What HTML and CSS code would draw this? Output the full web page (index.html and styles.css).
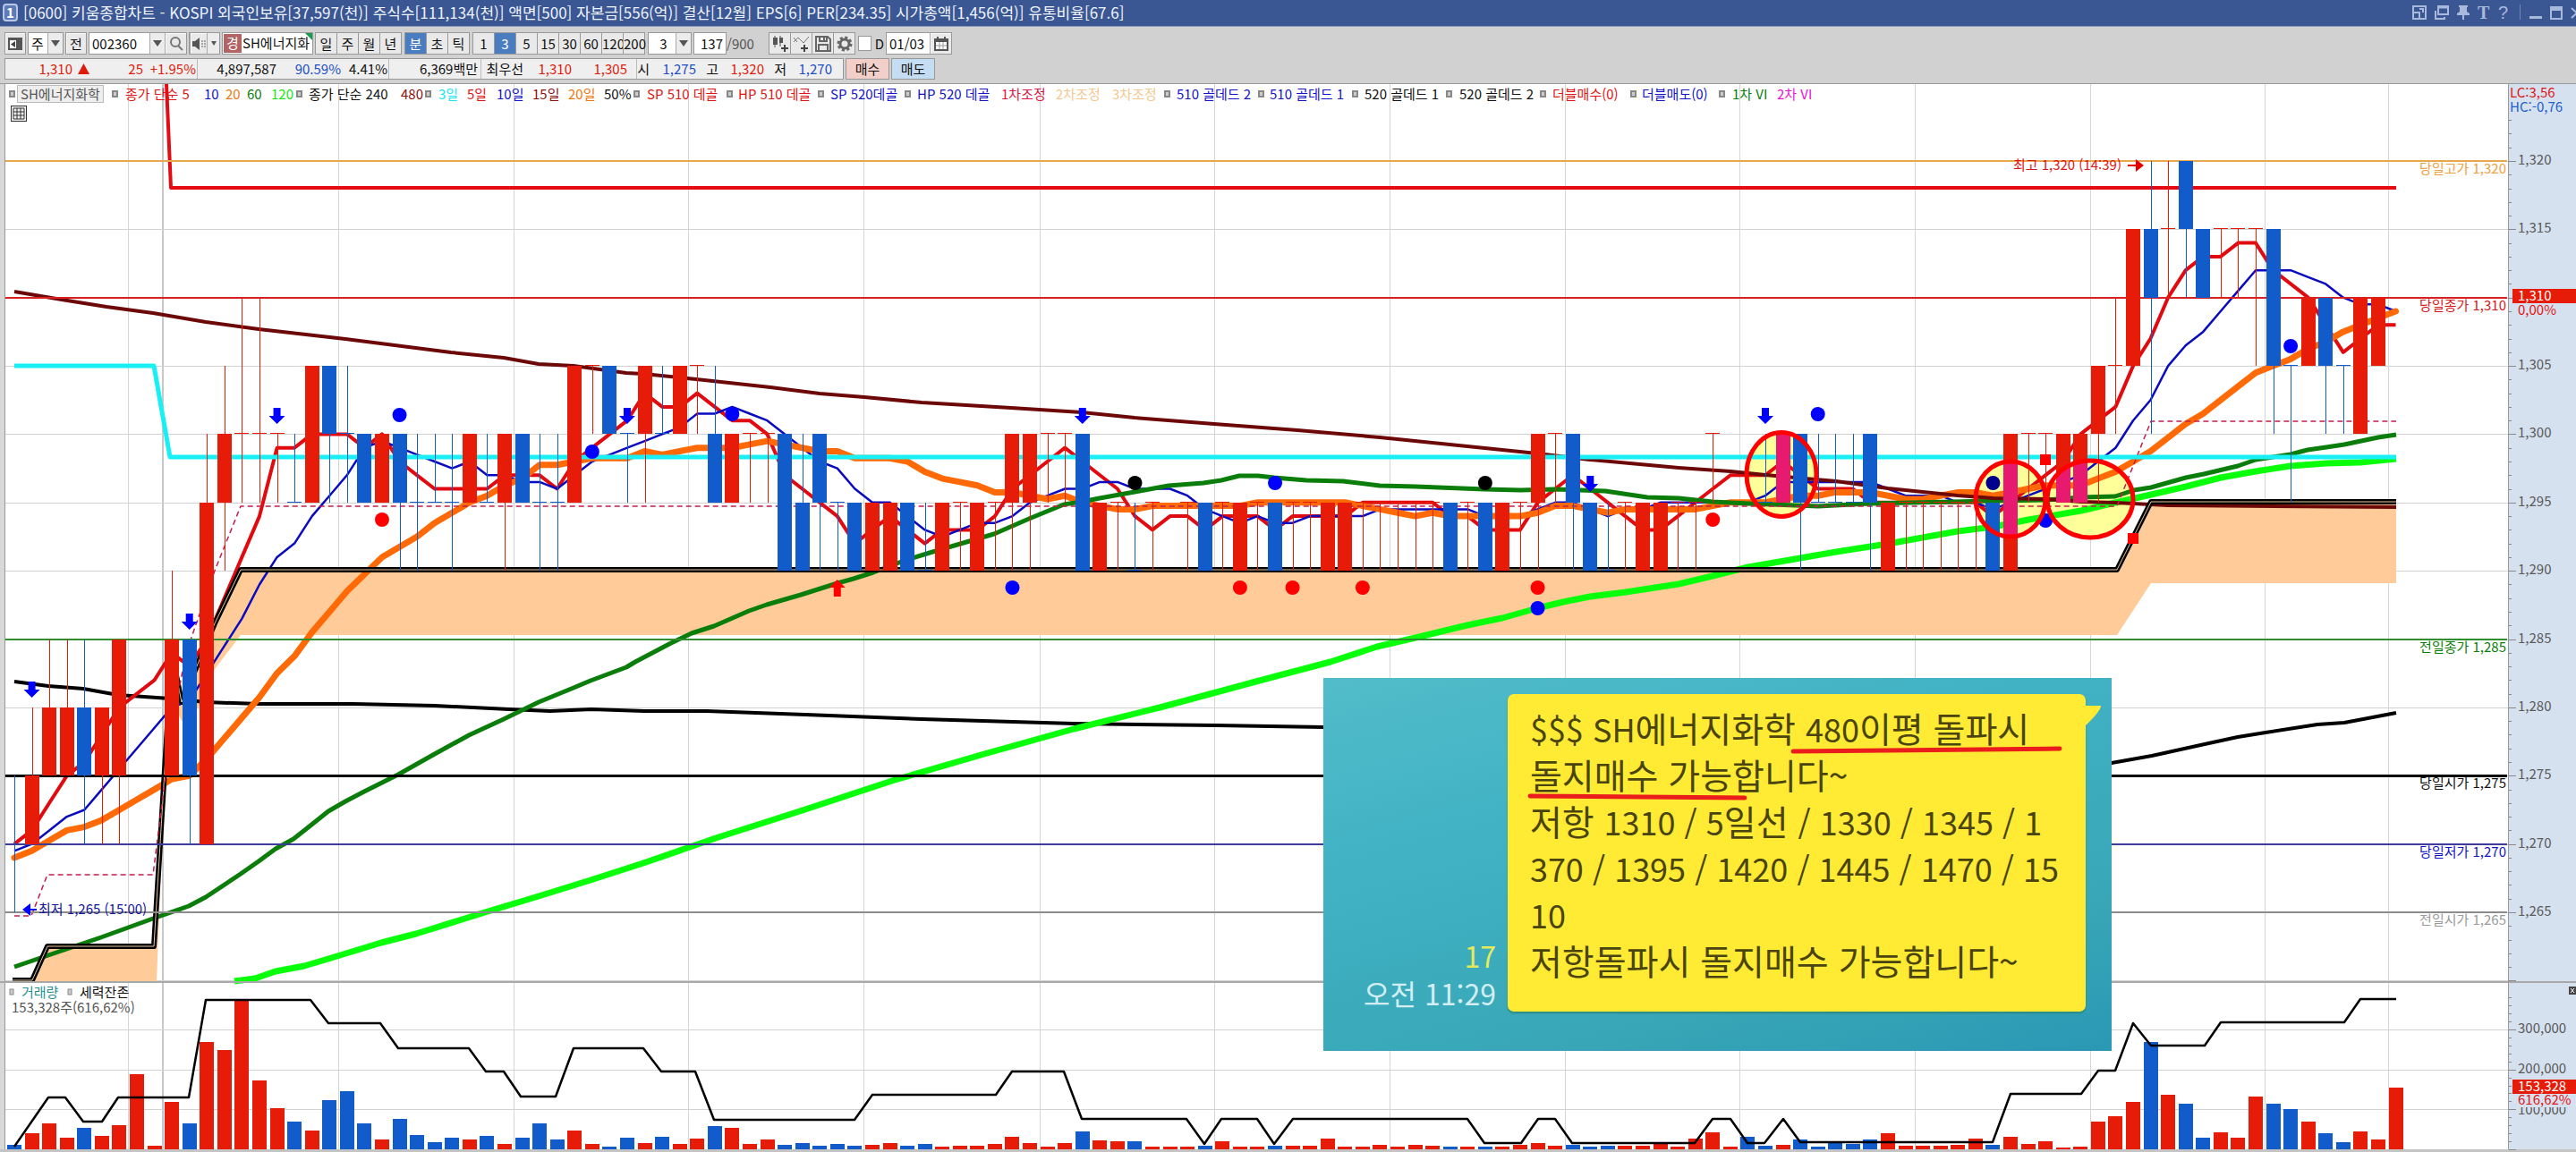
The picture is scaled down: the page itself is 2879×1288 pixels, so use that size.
FILE: index.html
```
<!DOCTYPE html>
<html lang="ko">
<head>
<meta charset="utf-8">
<title>[0600] 키움종합차트</title>
<link rel="stylesheet" href="styles.css">
</head>
<body>
<header class="titlebar">
  <span class="badge">1</span>
  <h1>[0600] 키움종합차트 - KOSPI 외국인보유[37,597(천)] 주식수[111,134(천)] 액면[500] 자본금[556(억)] 결산[12월] EPS[6] PER[234.35] 시가총액[1,456(억)] 유통비율[67.6]</h1>
  <div class="winbtns">
    <button aria-label="화면 축소"><svg width="16" height="16" viewBox="0 0 16 16"><path d="M1 1h14v14H1zM1 8h7v7"/><path d="M8 4h4v4"/></svg></button>
    <button aria-label="화면 복제"><svg width="16" height="16" viewBox="0 0 16 16"><path d="M4 1h11v9H4z"/><path d="M4 2.500h11" /><path d="M1 6v9h10v-2"/></svg></button>
    <button aria-label="고정"><svg width="14" height="18" viewBox="0 0 14 18"><path class="solid" d="M2 1h10v2h-1v5l3 2v2H8v5H6v-5H0v-2l3-2V3H2z"/></svg></button>
    <button class="serif">T</button>
    <button class="serif thin">?</button>
    <i></i>
    <button aria-label="최소화"><svg width="14" height="16" viewBox="0 0 14 16"><path class="solid" d="M0 12h14v3H0z"/></svg></button>
    <button aria-label="최대화"><svg width="14" height="16" viewBox="0 0 14 16"><path d="M1 2h12v13H1z"/><path class="solid" d="M0 2h14v4H0z"/></svg></button>
    <button aria-label="닫기"><svg width="14" height="16" viewBox="0 0 14 16"><path d="M1 3l12 11M13 3L1 14"/></svg></button>
  </div>
</header>

<div class="toolbar">
  <button class="btn w24" aria-label="목록"><svg width="16" height="16" viewBox="0 0 16 16"><path d="M1 2h14v12H1z" fill="#fff" stroke="#555" stroke-width="2"/><path d="M9 2h6v12H9zM1 1h14v3H1z" fill="#555"/><path d="M8 5v7L3 8.500z" fill="#444"/></svg></button>
  <div class="combo w40"><select aria-label="주기"><option>주</option></select><span class="drop"></span></div>
  <button class="btn w24">전</button>
  <div class="combo w110"><input class="left" aria-label="종목코드" value="002360"><span class="drop wide"></span><button class="btn w24 last" aria-label="검색"><svg width="16" height="16" viewBox="0 0 16 16"><circle cx="7" cy="6" r="5" fill="none" stroke="#777" stroke-width="2"/><path d="M10 10l5 5" stroke="#777" stroke-width="2"/></svg></button></div>
  <div class="combo w36"><button class="btn w20" aria-label="소리"><svg width="16" height="16" viewBox="0 0 16 16"><path d="M1 5h3l5-4v14l-5-4H1z" fill="#555"/><path d="M11 5h2M11 8h2M11 11h2M14 5h2M14 8h2M14 11h2" stroke="#666" stroke-width="1"/></svg></button><span class="drop small"></span></div>
  <div class="combo w102 stock"><b>경</b><span>SH에너지화</span></div>
  <div class="seg"><button>일</button><button>주</button><button>월</button><button>년</button></div>
  <div class="seg"><button class="on">분</button><button>초</button><button>틱</button></div>
  <div class="seg"><button>1</button><button class="on">3</button><button>5</button><button>15</button><button>30</button><button>60</button><button>120</button><button>200</button></div>
  <div class="combo w50"><select aria-label="분 간격" class="mid"><option>3</option></select><span class="drop"></span></div>
  <div class="count"><input aria-label="표시 봉 수" value="137"><span>/900</span></div>
  <div class="seg icons">
    <button aria-label="차트 추가"><svg width="20" height="20" viewBox="0 0 20 20"><path d="M4 1v13M10 1v12" stroke="#555"/><path d="M2 3h5v8H2zM9 3h4v6H9z" fill="#555"/><path d="M11 15h8M15 11v8" stroke="#444" stroke-width="2"/></svg></button>
    <button aria-label="지표 추가"><svg width="20" height="20" viewBox="0 0 20 20"><path d="M1 8l5-5 6 6 6-7M1 3l4 5" stroke="#777" fill="none"/><path d="M9 15h8M13 11v8" stroke="#444" stroke-width="2"/></svg></button>
    <button aria-label="저장"><svg width="20" height="20" viewBox="0 0 20 20"><path d="M2 2h13l3 3v13H2z" fill="none" stroke="#666" stroke-width="2"/><path d="M6 2v5h8V2M5 18v-7h10v7M11 3v3" fill="none" stroke="#666" stroke-width="2"/></svg></button>
    <button aria-label="설정"><svg width="20" height="20" viewBox="0 0 20 20"><circle cx="10" cy="10" r="5" fill="none" stroke="#666" stroke-width="3"/><circle cx="10" cy="10" r="7" fill="none" stroke="#666" stroke-width="3" stroke-dasharray="3 2.500"/></svg></button>
  </div>
  <label class="check"><input type="checkbox">D</label>
  <div class="combo w74"><input class="date" aria-label="날짜" value="01/03"><button class="btn w24 last" aria-label="달력"><svg width="16" height="16" viewBox="0 0 16 16"><path d="M1 3h14v12H1z" fill="#fff" stroke="#555" stroke-width="2"/><path d="M0 2h16v4H0z" fill="#555"/><path d="M4 0v3M12 0v3" stroke="#555" stroke-width="2"/><path d="M6 6v8M10 6v8M2 10h12" stroke="#999"/></svg></button></div>
</div>

<div class="quote">
  <div class="cells">
    <div class="c1 up"><span>1,310</span><svg width="13" height="12" viewBox="0 0 13 12"><path d="M6.500 0L13 12H0z" fill="#e01b0c"/></svg><span>25</span><span>+1.95%</span></div>
    <div class="c2"><span>4,897,587</span><span class="down">90.59%</span><span>4.41%</span></div>
    <div class="c3"><span>6,369백만</span></div>
    <div class="c4"><span>최우선</span><span class="up">1,310</span><span class="up">1,305</span></div>
    <div class="c5"><span>시</span><span class="down">1,275</span><span>고</span><span class="up">1,320</span><span>저</span><span class="down">1,270</span></div>
  </div>
  <button class="buy">매수</button>
  <button class="sell">매도</button>
</div>

<main class="chart">
  <svg id="plot" class="plot" viewBox="0 94 2879 1194" role="img" aria-label="SH에너지화학 3분봉 차트"></svg>
  <div class="legend">
    <i></i><b>SH에너지화학</b>
    <i></i><span class="red">종가 단순 5</span><span class="blue">10</span><span class="orange">20</span><span class="green">60</span><span class="lime">120</span>
    <i></i><span>종가 단순 240</span><span class="maroon">480</span>
    <i></i><span class="cyan">3일</span><span class="red">5일</span><span class="blue">10일</span><span class="maroon">15일</span><span class="orange">20일</span><span>50%</span>
    <i></i><span class="red">SP 510 데골</span><i></i><span class="red">HP 510 데골</span>
    <i></i><span class="blue">SP 520데골</span><i></i><span class="blue">HP 520 데골</span>
    <span class="crimson">1차조정</span><span class="sand">2차조정</span><span class="sand">3차조정</span>
    <i></i><span class="blue">510 골데드 2</span><i></i><span class="blue">510 골데드 1</span>
    <i></i><span>520 골데드 1</span><i></i><span>520 골데드 2</span>
    <i></i><span class="red">더블매수(0)</span><i></i><span class="blue">더블매도(0)</span>
    <i></i><span class="green">1차 VI</span><span class="magenta">2차 VI</span>
  </div>
  <button class="gridbtn" aria-label="표 보기"><svg width="14" height="14" viewBox="0 0 14 14"><path d="M1 1h12v12H1zM1 5h12M1 9h12M5 1v12M9 1v12" fill="none" stroke="#333"/></svg></button>

  <aside class="memo">
    <div class="meta"><span class="unread">17</span><time>오전 11:29</time></div>
    <p class="bubble"><span>$$$ SH</span>에너지화학 <span>480</span>이평 돌파시<br>돌지매수 가능합니다~<br>저항 <span>1310 / 5</span>일선 <span>/ 1330 / 1345 / 1</span><br><span>370 / 1395 / 1420 / 1445 / 1470 / 15</span><br><span>10</span><br>저항돌파시 돌지매수 가능합니다~</p>
    <svg class="marks" viewBox="0 0 881 417"><path d="M846 31H869q0 6 -18 23z" fill="#ffeb33"/><path d="M525 82L823 79M231 132L471 134" stroke="#ea1c1c" stroke-width="5" stroke-linecap="round"/></svg>
  </aside>
</main>
<script src="chart.js"></script>
</body>
</html>
```
FILE: styles.css
```
* { box-sizing: border-box; }
body {
  margin: 0;
  background: #d1d1d1;
  color: #111;
  font: 15px/20px "Noto Sans CJK KR", "Liberation Sans", sans-serif;
  overflow-x: hidden;
}
button, input, select { font: inherit; color: inherit; margin: 0; padding: 0; border: 0; border-radius: 0; background: none; }
svg { display: block; }

.titlebar { display: flex; align-items: center; gap: 6px; height: 30px; padding: 0 0 2px 3px; background: #3a5793; border-bottom: 1px solid #8b97b8; color: #eef2fb; overflow: hidden; }
.titlebar h1 { flex: 1; margin: 0; font-size: 17px; font-weight: 400; white-space: nowrap; }
.badge { width: 17px; height: 20px; border: 2px solid #b9c6e6; border-radius: 4px; background: #5d7bb8; font-weight: 700; line-height: 16px; text-align: center; color: #fff; }
.winbtns { display: flex; align-items: center; gap: 9px; margin-right: -8px; color: #a9b9dc; }
.winbtns i { width: 1px; height: 17px; margin: 0 1px 0 3px; background: #7186b6; }
.winbtns path { fill: none; stroke: #a9b9dc; stroke-width: 2; }
.winbtns .solid { fill: #a9b9dc; stroke: none; }
.serif { width: 13px; font: 700 20px/20px "Liberation Serif", serif; }
.thin { font-family: "Liberation Sans", sans-serif; font-weight: 400; }

.toolbar { display: flex; align-items: center; gap: 2px; height: 31px; padding: 6px 0 0 5px; white-space: nowrap; }
.toolbar > * { flex: none; height: 25px; }
.btn { display: flex; align-items: center; justify-content: center; height: 100%; background: #e9e9e9; border: 1px solid #999; box-shadow: inset 1px 1px #fafafa; }
.combo { display: flex; border: 1px solid #999; background: #fff; overflow: hidden; }
.combo > .btn { border: 0; border-left: 1px solid #aaa; }
.combo input, .combo select { flex: 1; min-width: 0; height: 100%; padding-left: 3px; appearance: none; background: #fff; }
.combo .mid { text-align: center; }
.w20 { width: 20px; } .w24 { width: 24px; } .w36 { width: 35px; } .w40 { width: 40px; } .w50 { width: 49px; }
.w74 { width: 74px; } .w102 { width: 102px; } .w110 { width: 110px; }
.drop { display: flex; align-items: center; justify-content: center; width: 17px; background: #ececec; border-left: 1px solid #aaa; }
.drop::after { content: ""; border: 5px solid transparent; border-top: 7px solid #555; border-bottom: 0; }
.small { width: 14px; }
.small::after { border-width: 5px 3px 0; }
.stock { position: relative; padding: 1px; }
.stock b { flex: none; width: 20px; background: #b26464; color: #fff; font-weight: 400; text-align: center; }
.stock span { padding-left: 1px; }
.stock::after { content: ""; position: absolute; top: 0; right: 0; border: 4px solid; border-color: #1a9c50 #1a9c50 transparent transparent; }
.seg { display: flex; border: 1px solid #999; border-left: 0; margin-right: 1px; }
.seg button { width: 24px; background: #e9e9e9; border-left: 1px solid #999; text-align: center; }
.seg .on { background: #4a7dc0; color: #fff; }
.icons button { display: flex; align-items: center; justify-content: center; }
.count { display: flex; align-items: center; width: 82px; color: #555; }
.count input { width: 37px; height: 25px; border: 1px solid #999; background: #fff; color: #111; text-align: right; padding-right: 3px; }
.check { display: flex; align-items: center; gap: 4px; width: 29px; }
.check input { appearance: none; width: 16px; height: 17px; background: #fff; border: 1px solid #999; }

.quote { display: flex; gap: 2px; height: 32px; padding: 4px 0 4px 5px; white-space: nowrap; }
.cells { display: flex; width: 938px; border: 1px solid #999; background: #efefef; }
.cells > div { display: grid; align-items: center; justify-items: end; border-right: 1px solid #bbb; }
.cells > div:last-child { border: 0; }
.c1 { width: 215px; grid-template-columns: 75px 19px 60px 59px; }
.c2 { width: 214px; grid-template-columns: 88px 72px 52px; }
.c3 { width: 103px; padding-right: 3px; }
.c4 { width: 174px; grid-template-columns: 47px 54px 62px; }
.c5 { width: 230px; grid-template-columns: 14px 52px 25px 51px 25px 51px; }
.up { color: #e01b0c; }
.down { color: #1d4fc4; }
.buy, .sell { width: 49px; border: 1px solid #999; background: #f3cfca; }
.sell { background: #c5ddf2; }

.chart { position: relative; border-top: 1px solid #999; }
.plot { width: 100%; height: auto; font-size: 15px; }
.legend {
  position: absolute; top: 1px; left: 10px; display: grid; align-items: center; white-space: nowrap;
  grid-template-columns: 9px 106px 15px 88px 24px 24px 27px 28px 14px 103px 27px 15px 32px 33px 40px 40px 40px 33px 15px 89px 13px 89px 14px 83px 14px 94px 61px 63px 58px 14px 91px 13px 92px 14px 91px 15px 90px 14px 87px 13px 86px 15px 50px 50px;
}
.legend i { width: 7px; height: 8px; border: 2px solid #888; background: #ccc; }
.legend b { justify-self: start; padding: 0 3px; background: #eee; border: 1px solid #bbb; font-weight: 400; line-height: 18px; color: #555; }
.red { color: #e01414; } .blue { color: #1414c8; } .orange { color: #f07810; } .green { color: #0a7d0a; }
.lime { color: #14e614; } .maroon { color: #8b1010; } .cyan { color: #19e6ee; } .crimson { color: #dc1446; }
.sand { color: #f5c890; } .magenta { color: #e614d2; }
.gridbtn { position: absolute; top: 24px; left: 12px; padding: 1px; border: 1px solid #333; background: #eee; }

.memo {
  position: absolute; left: 51.37%; top: 55.6%; width: 30.6%; height: 34.93%;
  display: flex; align-items: flex-end; justify-content: flex-end; gap: 13px; padding: 18px 29px 44px 0;
  background: linear-gradient(165deg, #52bcca, #40b2c4 35%, #38a6b6 75%, #2a98b4);
  white-space: nowrap;
}
.meta { display: flex; flex-direction: column; align-items: flex-end; font-size: 32px; line-height: 42px; color: #d3eef2; }
.unread { color: #e6ea5a; }
.bubble { width: 646px; height: 100%; margin: 0; padding: 11px 0 0 25px; border-radius: 7px; background: #ffeb33; box-shadow: 0 2px 2px #2f8a80; color: #4a4410; font-size: 39px; line-height: 52px; }
.bubble span { font-size: 36px; line-height: 1; }
.marks { position: absolute; inset: 0; width: 100%; height: 100%; }
```
FILE: chart.js
```
const svg = document.getElementById('plot');
const NS = 'http://www.w3.org/2000/svg';
const RED = '#e61b08', BLUE = '#115bcb';

function el(name, attrs, parent = svg) {
  const node = document.createElementNS(NS, name);
  for (const key in attrs) node.setAttribute(key, attrs[key]);
  parent.appendChild(node);
  return node;
}
function rect(x, y, width, height, fill, parent) { return el('rect', { x, y, width, height, fill }, parent); }
function text(x, y, str, fill, anchor = 'start') {
  el('text', { x, y, fill, 'text-anchor': anchor }).textContent = str;
}
function line(points, stroke, width, extra = {}) {
  return el('polyline', { points: points, stroke, 'stroke-width': width, fill: 'none', 'stroke-linejoin': 'round', ...extra });
}

// Levels count 5-won steps above 1,260.
const levelY = l => 1096.4 - l * 76.37;
const barX = i => 16 + i * 19.57;
const volumeBase = 1285;

// colour, body bottom, body top, high, low
const F7 = 'r7 7 7 6';
const candles = [
  'b2 3 3 1', 'r2 3 4 2', 'r3 4 5 3', 'r3 4 5 3', 'b3 4 5 2', 'r3 4 4 2', 'r3 5 5 2', 'r5 5 5 5', 'r5 5 5 5', 'r3 5 6 3',
  'b3 5 5 2', 'r2 7 8 2', 'r7 8 9 6', 'r8 8 10 7', 'r8 8 10 7', 'r8 8 8 7', 'b7 7 8 7', 'r7 9 9 7', 'b8 9 9 7', 'b8 8 9 7',
  'b7 8 8 7', 'r7 8 8 7', 'b7 8 8 6', 'b7 7 8 6', 'b7 7 8 7', 'b7 7 8 6', 'r7 8 8 7', 'b7 7 8 7', 'r7 8 8 6', 'b7 8 8 7',
  'b7 7 8 6', 'b7 7 8 6', 'r7 9 9 7', 'r9 9 9 8', 'b8 9 9 8', 'b8 8 8 7', 'r8 9 9 7', 'b8 8 9 8', 'r8 9 9 8', 'r9 9 9 8',
  'b7 8 9 7', 'r7 8 8 7', 'r8 8 8 7', 'r8 8 8 7', 'b6 8 8 6', 'b6 7 8 6', 'b7 8 8 6', 'b7 7 7 6', 'b6 7 7 6', 'r6 7 7 6',
  'r6 7 7 6', 'b6 7 7 6', 'b6 6 7 6', 'r6 7 7 6', F7, 'r6 7 7 6', F7, 'r7 8 8 6', 'r7 8 8 6', 'r8 8 8 7',
  'r8 8 8 7', 'b6 8 8 6', 'r6 7 7 6', F7, 'b6 6 7 6', F7, 'r7 7 7 7', F7, 'b6 7 7 6', F7,
  'r6 7 7 6', F7, 'b6 7 7 6', F7, F7, 'r6 7 7 6', 'r6 7 7 6', F7, F7, F7,
  F7, F7, 'b6 7 7 6', F7, 'b6 7 7 6', 'r6 7 7 6', F7, 'r7 8 8 6', 'r8 8 8 7', 'b7 8 8 6',
  'b6 7 7 6', 'b6 6 7 6', F7, 'r6 7 7 6', 'r6 7 7 6', F7, F7, 'r8 8 8 7', 'r8 8 8 8', 'b7 7 7 7',
  'b7 7 8 7', 'r7 8 8 7', 'b7 8 8 6', 'b7 7 8 7', 'b7 7 8 7', 'b7 7 8 7', 'b7 8 8 6', 'r6 7 7 6', F7, F7,
  F7, F7, F7, 'b6 7 7 6', 'r6 8 8 6', 'r8 8 8 7', 'r8 8 8 7', 'r7 8 8 7', 'r7 8 8 7', 'r8 9 9 7',
  'r9 9 10 8', 'r9 11 11 9', 'b10 11 12 8', 'r11 11 12 10', 'b11 12 12 10', 'b10 11 11 10', 'r11 11 11 10', 'r11 11 11 10', 'r11 11 11 9', 'b9 11 11 8',
  'b9 9 9 7', 'r9 10 10 9', 'b9 10 10 8', 'b9 9 9 8', 'r8 10 10 8', 'r9 10 10 9', 'r10 10 10 10'
].map(s => {
  const [bottom, top, high, low] = s.slice(1).split(' ').map(Number);
  return { up: s[0] === 'r', bottom, top, high, low };
});
const volumes = [
  5, 18, 29, 13, 24, 15, 27, 84, 4, 53, 29, 120, 111, 166, 77, 46, 31, 21, 55, 65, 29, 11, 34, 16, 8, 13, 11, 15, 6, 13,
  29, 11, 21, 6, 3, 13, 7, 14, 6, 12, 26, 24, 6, 11, 5, 7, 4, 6, 4, 5, 7, 4, 6, 3, 4, 4, 6, 14, 7, 3, 7, 20, 10, 9, 9,
  3, 3, 3, 4, 9, 3, 3, 4, 4, 4, 12, 3, 3, 5, 3, 5, 4, 3, 3, 3, 3, 5, 7, 4, 5, 3, 4, 4, 4, 7, 3, 12, 19, 3, 14,
  4, 5, 11, 3, 8, 6, 11, 18, 4, 4, 4, 5, 12, 5, 14, 6, 9, 2, 3, 31, 37, 53, 120, 61, 51, 13, 19, 13, 59, 51,
  45, 31, 18, 8, 20, 11, 69
];

// Frame and grid
rect(0, 94, 2879, 1194, '#fff');
rect(0, 94, 6, 1194, '#d8d8d8');
rect(5, 94, 1, 1194, '#999');
const grid = el('g', { 'shape-rendering': 'crispEdges' });
[143, 378, 574, 769, 965, 1162, 1357, 1553, 1749, 1944, 2140, 2336, 2531, 2669].forEach(x => rect(x, 94, 1, 1191, '#d6d6d6', grid));
rect(181, 94, 2, 1191, '#c8c8c8', grid);
for (let l = 0; l <= 12; l++) rect(6, Math.round(levelY(l)), 2797, 1, '#d2d2d2', grid);
[1151, 1196, 1240].forEach(y => rect(6, y, 2797, 1, '#d2d2d2', grid));

// Support band
const band = '14,1096 36,1096 53,1058 172,1058 192,730 203,785 222,740 240,697 269,637 2366,637 2404,561 2678,561';
el('polygon', { points: band + ' 2678,652 2404,652 2366,710 269,710 240,748 222,790 212,806 203,806 195,790 184,870 175,1097 14,1097', fill: '#fecb99' });

// Highlight fills sit under the price lines
const rings = [[1991, 530.5, 39, 47], [2247, 558, 39, 42], [2336, 558, 48, 43]];
rings.forEach(([cx, cy, rx, ry]) => el('ellipse', { cx, cy, rx, ry, fill: '#ffff99' }));

// Moving averages over the closes
const before = [1, 1, 1, 2, 2, 2, 2, 2, 2, 2, 2, 2, 2, 2, 1, 2, 2, 2, 2];
const closes = before.concat(candles.map((c, i) => i === 0 ? 2 : c.up ? c.top : c.bottom));
function average(n) {
  return candles.map((_, i) => {
    const part = closes.slice(i + 20 - n, i + 20);
    return barX(i).toFixed(1) + ',' + levelY(part.reduce((a, b) => a + b) / n).toFixed(1);
  }).join(' ');
}
line('16,762 54,767 93,770 132,777 190,781 230,785 289,787 395,787 486,789 569,793 615,795 661,793 720,795 790,795 900,799 1030,804 1200,809 1359,811 1480,813 1700,830 2000,860 2250,868 2360,853 2405,845 2464,832 2501,824 2532,819 2590,810 2620,808 2678,797', '#000', 4);
line(average(5), '#e00a0f', 4);
line(average(10), '#0a0ac0', 2.5);
line(average(20), '#ff6a06', 7, { 'stroke-linecap': 'round' });
line('262,1097 285,1094 308,1086 340,1080 367,1072 426,1054 465,1044 542,1020 602,1002 660,984 719,965 800,937 900,905 1000,872 1100,843 1200,815 1300,790 1400,763 1487,740 1539,723 1582,713 1640,699 1679,691 1718,680 1747,673 1777,667 1817,662 1876,653 1914,644 1954,634 2012,624 2052,617 2110,608 2188,594 2228,589 2267,581 2326,571 2364,562 2404,553 2443,544 2482,534 2521,527 2560,521 2600,518 2638,517 2678,513', '#0aff0a', 7);
line('16,1081 54,1068 113,1048 171,1027 211,1013 230,1003 269,977 289,963 308,949 328,938 347,923 367,907 386,896 407,885 445,866 484,844 524,822 563,804 602,785 641,769 660,761 700,746 710,740 748,720 773,708 798,700 837,683 857,676 895,665 936,652 954,647 976,640 1010,627 1039,618 1063,611 1111,597 1150,580 1189,564 1209,561 1229,557 1268,550 1306,543 1345,540 1365,537 1385,532 1406,532 1424,534 1460,537 1501,538 1542,543 1582,544 1659,547 1699,548 1738,547 1794,549 1841,556 1876,557 1914,561 1954,563 2032,566 2090,563 2228,560 2287,559 2326,556 2364,555 2385,548 2404,545 2443,534 2463,530 2501,521 2521,514 2560,508 2579,503 2600,500 2620,497 2658,489 2678,486', '#0a7d0a', 5);
line('16,326 69,335 119,343 171,350 230,360 289,368 386,379 504,394 563,400 602,407 641,409 700,417 719,418 778,424 861,433 916,440 966,444 1030,450 1130,456 1209,461 1268,467 1357,474 1450,481 1542,489 1640,499 1718,507 1777,514 1876,523 1934,527 1973,531 2052,538 2110,546 2188,554 2228,557 2287,558 2326,561 2364,562 2423,565 2678,567', '#6d0808', 4);
line(band, '#000', 6);
line(band, '#e6c8a0', 1);
line('16,1024 35,1024 53,978 171,978 192,812 208,730 240,638 269,566 2366,566 2404,471 2678,471', '#c41c4c', 1.5, { 'stroke-dasharray': '6 4' });
line('16,409 172,409 190,511 2678,511', '#19f0f5', 5);
line('186,94 191,210 2678,210', '#e60a12', 4);

// Reference prices
const refs = el('g', { 'shape-rendering': 'crispEdges' });
[[12, '#e8a850', 2], [10, '#d82020', 2], [5, '#2f8f2f', 2], [3, '#000', 3], [2, '#3c3c9c', 2], [1, '#8c8c8c', 2]]
  .forEach(([l, color, h]) => rect(6, Math.round(levelY(l)) - 1, 2796, h, color, refs));

// Candles and volume
const bars = el('g', { 'shape-rendering': 'crispEdges' });
candles.forEach((c, i) => {
  const x = Math.round(barX(i)), color = c.up ? RED : BLUE;
  rect(x, levelY(c.high), 1, (c.high - c.low) * 76.37, color, bars);
  if (c.bottom === c.top) { if (c.high > c.low) rect(x - 8, levelY(c.top) - 1, 16, 1, color, bars); }
  else if (i > 0) rect(x - 8, levelY(c.top), 16, (c.top - c.bottom) * 76.37, color, bars);
  rect(x - 8, volumeBase - volumes[i], 16, volumes[i], color, bars);
});

// Tinted parts of the candles inside the rings
const clip = el('clipPath', { id: 'ringClip' });
rings.forEach(([cx, cy, rx, ry]) => el('ellipse', { cx, cy, rx, ry }, clip));
const tint = el('g', { 'clip-path': 'url(#ringClip)' });
[[101, 7, 8], [114, 6, 8], [117, 7, 8], [118, 7, 8]].forEach(([i, low, high]) =>
  rect(Math.round(barX(i)) - 8, levelY(high), 16, (high - low) * 76.37, '#e81a70', tint));

// Signals
const dot = (i, y, fill) => el('ellipse', { cx: barX(i), cy: y, rx: 8, ry: 8, fill });
[[22, 464], [33, 505], [41, 463], [72, 540], [57, 657], [87, 680], [103, 463], [116, 582], [130, 387]].forEach(([i, y]) => dot(i, y, '#0000ff'));
[[21, 581], [70, 657], [73, 657], [77, 657], [87, 657], [97, 581]].forEach(([i, y]) => dot(i, y, '#ff0000'));
dot(64, 540, '#000'); dot(84, 540, '#000'); dot(113, 540, '#00008c');
[[1, 762], [10, 686], [15, 456], [35, 456], [61, 456], [90, 532], [100, 456]].forEach(([i, y]) => {
  el('path', { d: `M${barX(i) - 4} ${y}h8v9h5l-9 9l-9 -9h5z`, fill: '#0000ff' });
});
el('path', { d: `M${barX(47)} 648l9 9h-5v10h-8v-10h-5z`, fill: '#ff0000' });
rect(2280, 508, 12, 12, '#ff0000');
rect(2378, 596, 12, 12, '#ff0000');
rings.forEach(([cx, cy, rx, ry]) => el('ellipse', { cx, cy, rx, ry, fill: 'none', stroke: '#ff0000', 'stroke-width': 5 }));

// Volume pane
rect(0, 1097, 2879, 2, '#a8a8a8');
rect(0, 1285, 2879, 3, '#c4c4c4');
line('16,1282 54,1227 73,1227 93,1254 114,1254 132,1227 211,1227 230,1118 347,1118 367,1144 425,1144 445,1172 524,1172 543,1198 563,1198 582,1226 621,1226 641,1172 719,1172 739,1198 777,1198 798,1252 955,1252 975,1224 1113,1224 1131,1198 1189,1198 1209,1251 1326,1251 1346,1279 1365,1251 1405,1251 1424,1279 1445,1251 1640,1251 1659,1278 1700,1278 1719,1251 1738,1251 1757,1278 1894,1278 1914,1251 1934,1251 1953,1278 1972,1278 1993,1251 2012,1277 2227,1277 2247,1223 2326,1223 2345,1197 2364,1197 2384,1144 2404,1169 2464,1169 2482,1143 2620,1143 2638,1117 2678,1117', '#000', 2.5);
rect(11, 1106, 4, 6, '#ccc').setAttribute('stroke', '#888');
rect(76, 1106, 4, 6, '#ccc').setAttribute('stroke', '#888');
text(24, 1115, '거래량', '#2a9090');
text(89, 1115, '세력잔존', '#111');
text(13, 1132, '153,328주(616,62%)', '#555');

// Labels on the plot
[[12, '당일고가 1,320', '#f0a040'], [10, '당일종가 1,310', '#d81818'], [5, '전일종가 1,285', '#0a7d0a'],
 [3, '당일시가 1,275', '#111'], [2, '당일저가 1,270', '#1414c8'], [1, '전일시가 1,265', '#999']]
  .forEach(([l, label, color]) => text(2801, Math.round(levelY(l)) + 14, label, color, 'end'));
text(2371, 190, '최고 1,320 (14:39)', '#e01414', 'end');
el('path', { d: 'M2378 184h9v-6l9 7l-9 7v-6h-9z', fill: '#e60000' });
text(43, 1022, '최저 1,265 (15:00)', '#1414a0');
el('path', { d: 'M41 1016h-7v-6l-9 7l9 7v-6h7z', fill: '#0000ff' });

// Price axis
rect(2804, 94, 75, 1003, '#d6e1ef');
rect(2804, 1099, 75, 186, '#d6e1ef');
rect(2803, 94, 1, 1191, '#999');
for (let p = 1260; p <= 1323; p++) rect(2804, Math.round(levelY((p - 1260) / 5)), p % 5 ? 3 : 8, 1, '#888');
for (let l = 1; l <= 12; l++) if (l !== 10) text(2814, Math.round(levelY(l)) + 4, (1260 + l * 5).toLocaleString('en-US'), '#5a5a5a');
for (let v = 0; v <= 19; v++) rect(2804, Math.round(1285 - v * 8.93), v % 5 ? 3 : 8, 1, '#888');
text(2805, 109, 'LC:3,56', '#e01414');
text(2805, 125, 'HC:-0,76', '#1d5fd0');
rect(2808, 323, 71, 16, '#e61b08');
text(2814, 336, '1,310', '#fff');
text(2814, 352, '0,00%', '#e01414');
text(2814, 1155, '300,000', '#5a5a5a');
text(2814, 1200, '200,000', '#5a5a5a');
text(2814, 1246, '100,000', '#5a5a5a');
rect(2812, 1223, 67, 15, '#d6e1ef');
rect(2808, 1207, 71, 16, '#e61b08');
text(2814, 1220, '153,328', '#fff');
text(2814, 1235, '616,62%', '#e01414');
rect(2871, 1103, 8, 9, '#444');
el('path', { d: 'M2873 1105l4 5m0 -5l-4 5', stroke: '#fff', 'stroke-width': 1 });
```
